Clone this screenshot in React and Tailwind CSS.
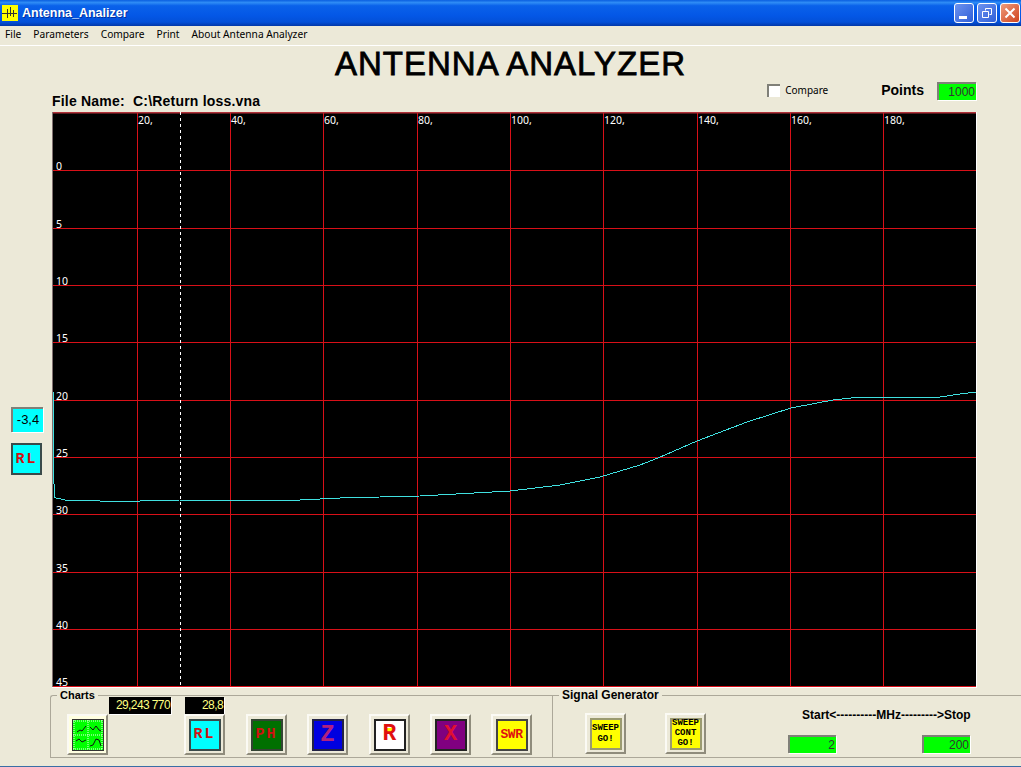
const gridX = [137, 230, 323, 417, 510, 603, 697, 790, 883];
const gridY = [170, 228, 285, 342, 400, 457, 514, 572, 629, 686];
const topLabels = ["20,", "40,", "60,", "80,", "100,", "120,", "140,", "160,", "180,"];
const sideLabels = ["0", "5", "10", "15", "20", "25", "30", "35", "40", "45"];

// trace in screen coordinates, the svg viewBox starts at the chart corner
const trace =
  "53.5,392 53.5,470 54.5,497 56,498 65,500 100,501 140,501 180,500 300,500 340,498 420,496 510,491 560,485 600,477 640,465 658,458 697,441 747,422 791,408 833,400 860,397 900,397 940,397 960,394 977,392";

const MiniCharts = () => (
  <svg width="30" height="30" viewBox="0 0 30 30" className="block">
    <rect width="30" height="30" fill="#00ff00" />
    <path d="M0 15H30M15 0V30M0 1H30M0 29H30M1 0V30M29 0V30" stroke="#e8ffe8" strokeWidth="1" strokeDasharray="1 1" fill="none" />
    <path d="M4 12L7 10L9 11L13 6M17 7L20 10L23 6L26 10L28 11M3 21L6 19L9 22L13 20M17 26L20 25L23 19L26 20L28 26" stroke="#111" strokeWidth="1" fill="none" />
  </svg>
);

const Bevel = ({ face = "bg-[#ece9d8]", children }) => (
  <div className={`w-[41px] h-[41px] flex items-center justify-center border-2 border-t-[#fbfaf4] border-l-[#fbfaf4] border-r-[#8f8c7c] border-b-[#8f8c7c] ${face}`}>
    {children}
  </div>
);

const Square = ({ className, children }) => (
  <div className={`relative w-[32px] h-[32px] flex flex-col items-center justify-center border-2 font-['Liberation_Mono',monospace] font-bold leading-none ${className}`}>
    {children}
  </div>
);

const Readout = ({ className, children }) => (
  <div className={`h-[17px] bg-black text-[#ffff80] text-[12px] tracking-[-0.6px] leading-[17px] text-right pr-[1px] shadow-[1px_1px_0_#fff] ${className}`}>
    {children}
  </div>
);

const GreenBox = ({ className, children }) => (
  <div className={`h-[18px] bg-[#00ff00] border-t-2 border-l-2 border-t-[#808078] border-l-[#808078] text-[12px] leading-[16px] text-right text-[#333] pr-[1px] shadow-[1px_1px_0_#fff] ${className}`}>
    {children}
  </div>
);

const WinButton = ({ className, children }) => (
  <div className={`w-[20px] h-[20px] rounded-[3px] border border-white flex items-center justify-center ${className}`}>
    {children}
  </div>
);

export default function App() {
  return (
    <div className="w-[1021px] h-[767px] overflow-hidden flex flex-col bg-[#ece9d8] text-black font-['Liberation_Sans',Arial,sans-serif]">
      {/* Title bar */}
      <div className="h-[26px] flex items-center pl-[2px] pr-[1px] bg-[linear-gradient(180deg,#0a5fe0_0%,#2f8cf5_10%,#0a62ea_22%,#0457e6_60%,#0350d8_85%,#0238a8_100%)]">
        <svg width="16" height="16" viewBox="0 0 16 16" className="block">
          <rect width="16" height="16" fill="#ffff00" />
          <path d="M0 8.5H15M5.5 4V13M8.5 2V11M11.5 5V12" stroke="#333" strokeWidth="1" />
        </svg>
        <span className="ml-[4px] text-white font-bold text-[12.5px] [text-shadow:1px_1px_0_#0030a0]">Antenna_Analizer</span>
        <div className="ml-auto flex gap-[3px]">
          <WinButton className="bg-[linear-gradient(135deg,#6d93ef,#2f5fd8)]">
            <div className="w-[8px] h-[3px] bg-white mt-[9px] mr-[3px]" />
          </WinButton>
          <WinButton className="bg-[linear-gradient(135deg,#6d93ef,#2f5fd8)]">
            <svg width="12" height="12" viewBox="0 0 12 12">
              <path d="M4.5 3.5V1.5H10.5V7.5H8.5M1.5 4.5H7.5V10.5H1.5Z" stroke="#fff" fill="none" />
            </svg>
          </WinButton>
          <WinButton className="bg-[linear-gradient(135deg,#ee9c7c,#d0431c)]">
            <svg width="12" height="12" viewBox="0 0 12 12">
              <path d="M1.5 1.5L10.5 10.5M10.5 1.5L1.5 10.5" stroke="#fff" strokeWidth="2" />
            </svg>
          </WinButton>
        </div>
      </div>

      {/* Menu */}
      <div className="h-[20px] border-b border-white flex items-center gap-[12px] pl-[5px] text-[10.2px] font-['Noto_Sans',sans-serif] pb-[1px]">
        <span>File</span>
        <span>Parameters</span>
        <span>Compare</span>
        <span>Print</span>
        <span>About Antenna Analyzer</span>
      </div>

      <div className="h-[34px] flex justify-center items-center text-[33px] tracking-[1px] leading-none [-webkit-text-stroke:0.8px_#000]">
        ANTENNA ANALYZER
      </div>

      {/* File name, compare, points */}
      <div className="h-[32px] flex pl-[52px] pr-[45px]">
        <div className="mt-auto mb-[3px] text-[14px] tracking-[0.2px] font-bold whitespace-pre leading-[16px]">File Name:  C:\Return loss.vna</div>
        <div className="ml-auto flex items-center h-[20px] text-[10px] font-['Noto_Sans',sans-serif]">
          <div className="w-[13px] h-[13px] bg-white border-t-2 border-l-2 border-t-[#808078] border-l-[#808078]" />
          <span className="ml-[5px]">Compare</span>
        </div>
        <div className="ml-[53px] mt-[2px] text-[14px] font-bold leading-[16px]">Points</div>
        <GreenBox className="ml-[13px] mt-[2px] w-[39px]">1000</GreenBox>
      </div>

      {/* Chart row */}
      <div className="h-[576px] flex">
        <div className="w-[52px] pl-[11px] pt-[295px]">
          <div className="w-[32px] h-[25px] bg-[#00ffff] border-t-2 border-l-2 border-t-[#808078] border-l-[#808078] shadow-[1px_1px_0_#fff] text-[13px] leading-[22px] text-center">-3,4</div>
          <div className="mt-[11px] w-[31px] h-[32px] bg-[#00ffff] border-2 border-[#3a4a4a] flex items-center justify-center text-[15px] font-bold text-[#d01010] font-['Liberation_Mono',monospace] leading-none tracking-[2px]">RL</div>
        </div>
        <div className="w-[925px] h-[576px] border-r border-b border-white">
          <svg width="924" height="575" viewBox="52 112 924 575" className="block bg-black font-['Noto_Sans',sans-serif]">
            {gridX.map((x) => (
              <line key={x} x1={x + 0.5} x2={x + 0.5} y1="112" y2="687" stroke="#d81018" />
            ))}
            {gridY.map((y) => (
              <line key={y} x1="52" x2="976" y1={y + 0.5} y2={y + 0.5} stroke="#d81018" />
            ))}
            <line x1="52" x2="976" y1="112.5" y2="112.5" stroke="#b03038" strokeWidth="2" />
            <line x1="52.5" x2="52.5" y1="112" y2="687" stroke="#807070" />
            <line x1="180.5" x2="180.5" y1="112" y2="687" stroke="#fff" strokeDasharray="3 3" />
            {topLabels.map((t, i) => (
              <text key={t} x={gridX[i] + 1} y="124" fill="#fff" fontSize="10.5">{t}</text>
            ))}
            {sideLabels.map((t, i) => (
              <text key={t} x="56" y={gridY[i] - 0.5} fill="#fff" fontSize="10.5">{t}</text>
            ))}
            <polyline points={trace} fill="none" stroke="#40e0e0" strokeWidth="1" shapeRendering="crispEdges" />
          </svg>
        </div>
      </div>

      {/* Bottom group boxes */}
      <div className="mt-[7px] ml-[50px] h-[63px] flex border border-r-0 border-[#aca899] rounded-tl-[3px]">
        <div className="relative w-[502px] border-r border-[#aca899] pl-[16px]">
          <div className="absolute left-[6px] -top-[8px] px-[3px] bg-[#ece9d8] text-[11px] font-bold leading-[14px]">Charts</div>
          <div className="flex pt-px h-[18px]">
            <Readout className="ml-[42px] w-[62px]">29,243 770</Readout>
            <Readout className="ml-[14px] w-[39px]">28,8</Readout>
          </div>
          <div className="flex">
            <Bevel face="bg-[#ffffe0]">
              <div className="border border-[#333]"><MiniCharts /></div>
            </Bevel>
            <div className="ml-[76px]">
              <Bevel>
                <Square className="bg-[#00ffff] border-[#3a4a4a] text-[15px] text-[#d01010] tracking-[2px]">RL</Square>
              </Bevel>
            </div>
            <div className="ml-[21px]">
              <Bevel>
                <Square className="bg-[#007000] border-[#334433] text-[15px] text-[#d01010] tracking-[2px]">PH</Square>
              </Bevel>
            </div>
            <div className="ml-[20px]">
              <Bevel>
                <Square className="bg-[#0000e0] border-[#222244] text-[24px] text-[#b02080]">Z</Square>
              </Bevel>
            </div>
            <div className="ml-[21px]">
              <Bevel>
                <Square className="bg-white border-[#222] text-[23px] text-[#e01010]">
                  <span className="absolute left-[10px] top-[7px] w-[8px] h-[4px] bg-[#ffff00]" />
                  <span className="relative">R</span>
                </Square>
              </Bevel>
            </div>
            <div className="ml-[20px]">
              <Bevel>
                <Square className="bg-[#800080] border-[#222] text-[22px] text-[#e01030]">X</Square>
              </Bevel>
            </div>
            <div className="ml-[20px]">
              <Bevel>
                <Square className="bg-[#ffff00] border-[#444] text-[13px] tracking-[-0.5px] text-[#e01010]">SWR</Square>
              </Bevel>
            </div>
          </div>
        </div>
        <div className="relative flex-1 pl-[32px]">
          <div className="absolute left-[6px] -top-[8px] px-[3px] bg-[#ece9d8] text-[12px] font-bold leading-[14px]">Signal Generator</div>
          <div className="flex pt-[17px]">
            <Bevel>
              <Square className="bg-[#ffff00] border-[#9a9a70] text-[9px] leading-[10px] text-black">
                <span>SWEEP</span>
                <span className="mt-[2px]">GO!</span>
              </Square>
            </Bevel>
            <div className="ml-[39px]">
              <Bevel>
                <Square className="bg-[#ffff00] border-[#9a9a70] text-[9px] text-black">
                  <span>SWEEP</span>
                  <span className="mt-[1px]">CONT</span>
                  <span className="mt-[1px]">GO!</span>
                </Square>
              </Bevel>
            </div>
            <div className="ml-[82px] w-[182px] flex flex-col">
              <div className="-mt-[5px] pl-[14px] text-[12px] font-bold leading-[14px] whitespace-nowrap">Start&lt;----------MHz---------&gt;Stop</div>
              <div className="mt-[13px] flex justify-between">
                <GreenBox className="w-[48px]">2</GreenBox>
                <GreenBox className="w-[48px]">200</GreenBox>
              </div>
            </div>
          </div>
        </div>
      </div>
      <div className="flex-1 border-b border-[#3a6ea5]" />
    </div>
  );
}
